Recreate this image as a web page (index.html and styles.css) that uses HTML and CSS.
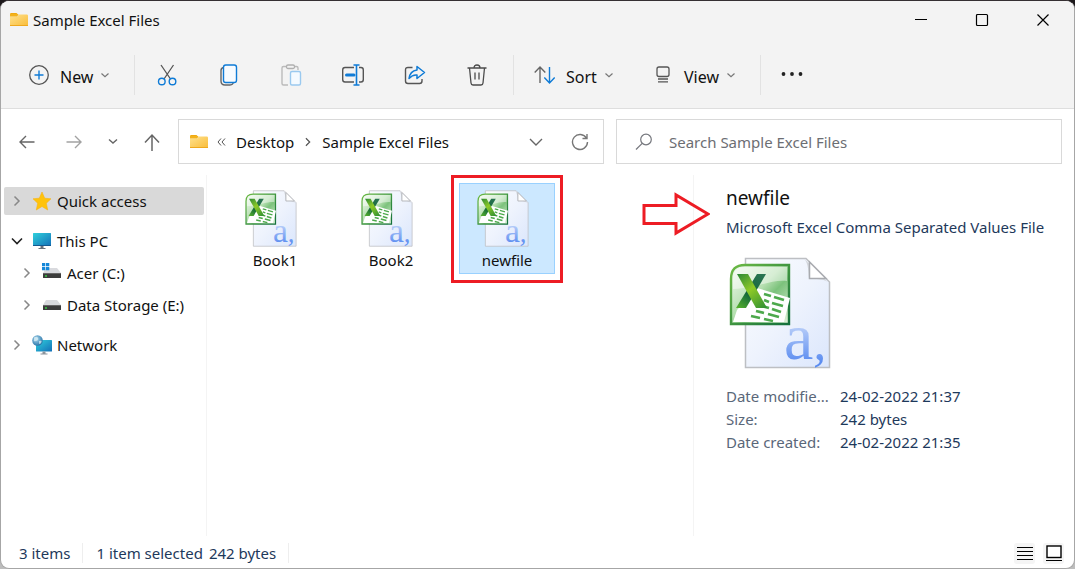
FILE: index.html
```html
<!DOCTYPE html>
<html lang="en">
<head>
<meta charset="utf-8">
<meta name="viewport" content="width=device-width, initial-scale=1">
<title>Sample Excel Files</title>
<link rel="stylesheet" href="styles.css">
</head>
<body>
<svg class="sprite" aria-hidden="true">
  <defs>
    <linearGradient id="folder-fill" x1="0" y1="0" x2="1" y2="1"><stop offset="0" stop-color="#ffe18d"/><stop offset="1" stop-color="#f9bd3a"/></linearGradient>
    <linearGradient id="screen-fill" x1="0" y1="0" x2="1" y2="1"><stop offset="0" stop-color="#2fd0dc"/><stop offset="1" stop-color="#1470b8"/></linearGradient>
    <linearGradient id="page-fill" x1="0" y1="0" x2="1" y2="1"><stop offset="0" stop-color="#fbfcff"/><stop offset="0.5" stop-color="#eef3fd"/><stop offset="1" stop-color="#dbe6fc"/></linearGradient>
    <linearGradient id="green-fill" x1="0" y1="0" x2="1" y2="1"><stop offset="0" stop-color="#f4fbf1"/><stop offset="0.45" stop-color="#b5dfb0"/><stop offset="0.6" stop-color="#7cc27c"/><stop offset="1" stop-color="#e2f3dd"/></linearGradient>
    <linearGradient id="green-edge" x1="0" y1="0" x2="1" y2="1"><stop offset="0" stop-color="#6dbb45"/><stop offset="1" stop-color="#14703c"/></linearGradient>
    <linearGradient id="light-stroke" gradientUnits="userSpaceOnUse" x1="10" y1="17" x2="38" y2="51"><stop offset="0" stop-color="#2d8a35"/><stop offset="0.45" stop-color="#8fca27"/><stop offset="1" stop-color="#2f8f33"/></linearGradient>
    <linearGradient id="dark-stroke" gradientUnits="userSpaceOnUse" x1="36" y1="17" x2="10" y2="51"><stop offset="0" stop-color="#2b7553"/><stop offset="0.6" stop-color="#12663a"/><stop offset="1" stop-color="#55b02c"/></linearGradient>
    <linearGradient id="letter-fill" x1="0" y1="0" x2="0" y2="1"><stop offset="0.4" stop-color="#b0c8f8"/><stop offset="0.85" stop-color="#5c8df0"/></linearGradient>
    <radialGradient id="globe-fill" cx="0.4" cy="0.35" r="0.7"><stop offset="0" stop-color="#a9d8ee"/><stop offset="1" stop-color="#226fa5"/></radialGradient>
  </defs>
  <symbol id="folder" viewBox="0 0 18 16">
    <path d="M0 2.200Q0 1 1.200 1H6.500L8.500 3H0Z" fill="#f0a90f"/>
    <path d="M0 4.500H7.200L9 2.500H16.800Q18 2.500 18 3.700V13.800H0Z" fill="url(#folder-fill)"/>
    <path d="M0 2h7l1.500.8L7 4.500H0Z" fill="#f3b21b"/>
    <path d="M0 13.500H18" stroke="#efa81d"/>
  </symbol>
  <symbol id="chevron-down" viewBox="0 0 8 8"><path d="M.5 2.500 4 5.700 7.500 2.500" fill="none" stroke="currentColor" stroke-width="1.200"/></symbol>
  <symbol id="chevron-right" viewBox="0 0 8 12"><path d="M1.500 1.500 6 6 1.500 10.500" fill="none" stroke="currentColor" stroke-width="1.500"/></symbol>
  <symbol id="drive" viewBox="0 0 20 16">
    <path d="M4 4H15L19 9H1Z" fill="#d9dade"/>
    <rect x="1" y="9" width="18" height="5" rx="0.500" fill="#3c3c3c"/>
    <rect x="1" y="9" width="18" height="1" fill="#666"/>
    <circle cx="4" cy="12" r="0.900" fill="#39dd46"/>
  </symbol>
  <symbol id="csv-file" viewBox="0 0 120 112">
    <path d="M17.500 1.500H78L101.500 25V110.500H17.500Z" fill="url(#page-fill)" stroke="#bdbfc3" stroke-width="1.500"/>
    <path d="M76 1.500C81 7 80 16 81 22C88 22 97 21 101.500 27Z" fill="#d3d6db"/>
    <path d="M81.500 5V21.500H98Z" fill="#fff" stroke="#a9abb0" stroke-width="1.500"/>
    <path d="M17 8H61V67H3V22Q3 8 17 8Z" fill="url(#green-fill)" stroke="url(#green-edge)" stroke-width="2.400"/>
    <path d="M17 10H59V24C44 22 30 31 5 32V22Q5 10 17 10Z" fill="#fff" opacity="0.450"/>
    <path d="M5 65 9 53 29 31 62 41 56 65Z" fill="#fff"/>
    <g stroke="#4da94c" stroke-width="2.800" fill="none">
      <path d="M36 37l7 2M46 40l10 3M36 43l5 2M44 46l11 3M34 49l7 2M44 52l9 3M28 54l8 2M40 57l11 3M23 59l9 2M36 62l9 2"/>
    </g>
    <path d="M8 51 29 17H38L18 51Z" fill="url(#dark-stroke)"/>
    <path d="M9 17H20L39 51H28Z" fill="url(#light-stroke)"/>
  </symbol>
</svg>

<div class="window">
  <header class="chrome">
    <div class="titlebar">
      <svg class="icon-folder"><use href="#folder"/></svg>
      <h1 class="title">Sample Excel Files</h1>
      <button class="caption-button" aria-label="Minimize"><svg width="14" height="14" viewBox="0 0 14 14"><path d="M1 6.500H13" stroke="#000"/></svg></button>
      <button class="caption-button" aria-label="Maximize"><svg width="14" height="14" viewBox="0 0 14 14"><rect x="1.500" y="1.500" width="11" height="11" rx="1" fill="none" stroke="#000" stroke-width="1.200"/></svg></button>
      <button class="caption-button" aria-label="Close"><svg width="14" height="14" viewBox="0 0 14 14"><path d="M1.500 1.500l11 11m0-11-11 11" stroke="#000" stroke-width="1.200"/></svg></button>
    </div>
    <div class="toolbar" role="toolbar" aria-label="Commands">
      <button class="command command-new">
        <svg width="22" height="22" viewBox="0 0 22 22" fill="none"><circle cx="11" cy="11" r="9.300" stroke="#555" stroke-width="1.300"/><path d="M11 6.500v9M6.500 11h9" stroke="#0f7bd6" stroke-width="1.400"/></svg>
        <span>New</span><svg class="chevron"><use href="#chevron-down"/></svg>
      </button>
      <span class="divider"></span>
      <div class="tools">
        <button class="tool" aria-label="Cut"><svg width="24" height="24" viewBox="0 0 24 24" fill="none"><path d="M6 2 15.500 16M18.500 2 9 16" stroke="#555" stroke-width="1.300"/><circle cx="6.800" cy="18.500" r="3.300" stroke="#0f7bd6" stroke-width="1.400"/><circle cx="17.500" cy="18.500" r="3.300" stroke="#0f7bd6" stroke-width="1.400"/></svg></button>
        <button class="tool" aria-label="Copy"><svg width="24" height="24" viewBox="0 0 24 24" fill="none"><path d="M6.500 4.500Q4 5 4 7.500V18Q4 22 8 22h5q2.500 0 3.300-2" stroke="#666" stroke-width="1.400"/><rect x="6.500" y="2" width="13" height="17.500" rx="2.200" fill="#f7fbff" stroke="#0f7bd6" stroke-width="1.400"/></svg></button>
        <button class="tool" aria-label="Paste" disabled><svg width="24" height="24" viewBox="0 0 24 24" fill="none"><path d="M8 3.500H4.500Q3 3.500 3 5V20.500Q3 22 4.500 22H9M15 3.500h2.500Q19 3.500 19 5v2" stroke="#bababa" stroke-width="1.400"/><rect x="7.500" y="2" width="8" height="3.500" rx="1.500" stroke="#b0b0b0" stroke-width="1.300"/><rect x="11.500" y="8.500" width="10" height="13.500" rx="1.500" fill="#f4faff" stroke="#9ac9ef" stroke-width="1.400"/></svg></button>
        <button class="tool" aria-label="Rename"><svg width="24" height="24" viewBox="0 0 24 24" fill="none"><path d="M13 4.500H4Q1.700 4.500 1.700 7v9.500Q1.700 19 4 19h9M18 4.500h2q2.300 0 2.300 2.500v9.500q0 2.500-2.300 2.500h-2" stroke="#555" stroke-width="1.400"/><path d="M5.500 12h7.500" stroke="#0f7bd6" stroke-width="3" stroke-linecap="round"/><path d="M15.500 2v20M12.500 2h6M12.500 22h6" stroke="#0f7bd6" stroke-width="1.600"/></svg></button>
        <button class="tool" aria-label="Share"><svg width="24" height="24" viewBox="0 0 24 24" fill="none"><path d="M9.500 4.500H5Q2.500 4.500 2.500 7V18Q2.500 20.500 5 20.500H16.500Q19 20.500 19 18V16" stroke="#555" stroke-width="1.400"/><path d="M14 3.500 21.500 9.500 14 15.500V12Q9.500 11.500 6 15.500Q7 8 14 7Z" stroke="#0f7bd6" stroke-width="1.500" stroke-linejoin="round"/></svg></button>
        <button class="tool" aria-label="Delete"><svg width="24" height="24" viewBox="0 0 24 24" fill="none"><path d="M2.500 5H21.500M9 5Q9 2 12 2t3 3M4.500 5 6 20Q6.200 22 8 22h8q1.800 0 2-2L19.500 5M10 9.500v7M14 9.500v7" stroke="#4c4c4c" stroke-width="1.300"/></svg></button>
      </div>
      <span class="divider"></span>
      <button class="command command-sort">
        <svg width="22" height="22" viewBox="0 0 22 22" fill="none" stroke-width="1.400"><path d="M6 19V3M0.700 8.500 6 3l5.300 5.500" stroke="#666"/><path d="M15.500 3v16M10.300 13.500l5.200 5.500 5.200-5.500" stroke="#0f7bd6"/></svg>
        <span>Sort</span><svg class="chevron"><use href="#chevron-down"/></svg>
      </button>
      <button class="command command-view">
        <svg width="22" height="22" viewBox="0 0 22 22" fill="none" stroke="#555" stroke-width="1.300"><rect x="5" y="3" width="12" height="9.500" rx="2"/><path d="M6 15h10M6 17.800h10"/></svg>
        <span>View</span><svg class="chevron"><use href="#chevron-down"/></svg>
      </button>
      <span class="divider"></span>
      <button class="tool" aria-label="See more"><svg width="24" height="24" viewBox="0 0 24 24" fill="#222"><circle cx="3.500" cy="11" r="1.900"/><circle cx="12" cy="11" r="1.900"/><circle cx="20.500" cy="11" r="1.900"/></svg></button>
    </div>
  </header>

  <div class="navigation">
    <nav class="history" aria-label="History">
      <button aria-label="Back"><svg width="18" height="18" viewBox="0 0 18 18"><path d="M16.500 9H2M8 3 2 9l6 6" fill="none" stroke="#666" stroke-width="1.400"/></svg></button>
      <button aria-label="Forward"><svg width="18" height="18" viewBox="0 0 18 18"><path d="M1.500 9H16M10 3l6 6-6 6" fill="none" stroke="#a2a2a2" stroke-width="1.400"/></svg></button>
      <button aria-label="Recent locations"><svg width="10" height="18" viewBox="0 0 10 18"><path d="M1 6.500 5 10 9 6.500" fill="none" stroke="#666" stroke-width="1.400"/></svg></button>
      <button aria-label="Up"><svg width="18" height="18" viewBox="0 0 18 18"><path d="M9 18V2M2 9.500 9 2l7 7.500" fill="none" stroke="#666" stroke-width="1.500"/></svg></button>
    </nav>
    <div class="address">
      <svg class="icon-folder"><use href="#folder"/></svg>
      <svg class="collapse" viewBox="0 0 9 8"><path d="M4 .5 1 4l3 3.500M8 .5 5 4l3 3.500" fill="none" stroke="#555"/></svg>
      <a href="#desktop">Desktop</a>
      <svg class="crumb-arrow"><use href="#chevron-right"/></svg>
      <a class="current-folder" href="#files">Sample Excel Files</a>
      <button aria-label="Previous locations"><svg width="14" height="14" viewBox="0 0 14 14"><path d="M1 4 7 10 13 4" fill="none" stroke="#666" stroke-width="1.400"/></svg></button>
      <button aria-label="Refresh"><svg width="18" height="18" viewBox="0 0 18 18" fill="none" stroke="#777" stroke-width="1.400"><path d="M15.500 5.200A7.500 7.500 0 1 0 16.500 9M16 1v4.500H11.500"/></svg></button>
    </div>
    <label class="search">
      <svg width="18" height="18" viewBox="0 0 18 18" fill="none" stroke="#75777d" stroke-width="1.200"><circle cx="11" cy="6.500" r="5.300"/><path d="M7.200 10.300 1 16.500"/></svg>
      <input type="search" placeholder="Search Sample Excel Files" aria-label="Search Sample Excel Files">
    </label>
  </div>

  <div class="body">
    <nav class="sidebar" aria-label="Folders">
      <a class="node selected" href="#quick"><svg class="twist"><use href="#chevron-right"/></svg><svg class="node-icon" viewBox="0 0 20 20"><path d="M10 1 12.700 7.200 19 7.800 14.300 12.200 15.700 19 10 15.500 4.300 19 5.700 12.200 1 7.800 7.300 7.200Z" fill="#ffc30b" stroke="#f9b414" stroke-width="0.600"/></svg>Quick access</a>
      <a class="node group" href="#pc"><svg class="twist open" viewBox="0 0 12 8"><path d="M1 1.500 6 6.500 11 1.500" fill="none" stroke="currentColor" stroke-width="1.600"/></svg><svg class="node-icon" viewBox="0 0 20 20"><rect x="1" y="2" width="18" height="13" rx="0.500" fill="url(#screen-fill)"/><path d="M1 14.500H19" stroke="#145a91"/><path d="M8.500 15h3v2h2v1h-7v-1h2Z" fill="#69717b"/></svg>This PC</a>
      <a class="node child" href="#c"><svg class="twist"><use href="#chevron-right"/></svg><svg class="node-icon" viewBox="0 0 20 20"><use href="#drive" y="1" width="20" height="16"/><path d="M0 0h3.300v3.300H0ZM4 0h3.300v3.300H4ZM0 4h3.300v3.300H0ZM4 4h3.300v3.300H4Z" fill="#1587d8"/></svg>Acer (C:)</a>
      <a class="node child" href="#e"><svg class="twist"><use href="#chevron-right"/></svg><svg class="node-icon" viewBox="0 0 20 20"><use href="#drive" y="1" width="20" height="16"/></svg>Data Storage (E:)</a>
      <a class="node group" href="#network"><svg class="twist"><use href="#chevron-right"/></svg><svg class="node-icon" viewBox="0 0 20 20"><rect x="4" y="5" width="16" height="11.500" rx="0.500" fill="url(#screen-fill)"/><path d="M10.500 16.500h3v2h2v1h-7v-1h2Z" fill="#8b949c"/><circle cx="5.500" cy="5.500" r="5.300" fill="url(#globe-fill)"/><path d="M2 2.500Q5 1 6 3T4 6 2 5ZM7 6q3-1 2.500 1T7 9Z" fill="#e1f2f7" opacity="0.700"/></svg>Network</a>
    </nav>
    <main class="files">
      <button class="file"><svg class="file-icon" viewBox="0 0 120 112" aria-hidden="true"><use href="#csv-file" width="120" height="112"/><text class="letter" x="56" y="102">a<tspan class="comma">,</tspan></text></svg>Book1</button>
      <button class="file"><svg class="file-icon" viewBox="0 0 120 112" aria-hidden="true"><use href="#csv-file" width="120" height="112"/><text class="letter" x="56" y="102">a<tspan class="comma">,</tspan></text></svg>Book2</button>
      <button class="file chosen"><svg class="file-icon" viewBox="0 0 120 112" aria-hidden="true"><use href="#csv-file" width="120" height="112"/><text class="letter" x="56" y="102">a<tspan class="comma">,</tspan></text></svg>newfile</button>
    </main>
    <aside class="details">
      <svg class="pointer" viewBox="0 0 68 44"><path d="M2 13.500H34V3L66 22 34 41V31.500H2Z" fill="none" stroke="#ed1c24" stroke-width="3"/></svg>
      <h2>newfile</h2>
      <p class="kind">Microsoft Excel Comma Separated Values File</p>
      <svg class="preview" viewBox="0 0 120 112" aria-hidden="true"><use href="#csv-file" width="120" height="112"/><text class="letter" x="56" y="102">a<tspan class="comma">,</tspan></text></svg>
      <dl>
        <dt>Date modifie...</dt><dd>24-02-2022 21:37</dd>
        <dt>Size:</dt><dd>242 bytes</dd>
        <dt>Date created:</dt><dd>24-02-2022 21:35</dd>
      </dl>
    </aside>
  </div>

  <footer class="status">
    <span class="count">3 items</span>
    <span class="selection"><span>1 item selected</span><span>242 bytes</span></span>
    <button class="view-mode" aria-label="Details view"><svg width="16" height="16" viewBox="0 0 16 16"><path d="M0 2.500H16M0 6.500H16M0 10.500H16M0 14.500H16" stroke="#000"/></svg></button>
    <button class="view-mode" aria-label="Large icons view"><svg width="16" height="16" viewBox="0 0 16 16"><rect x="1" y="1" width="14" height="11.500" fill="#fff" stroke="#000" stroke-width="1.400"/><path d="M0 15.500H16" stroke="#000"/></svg></button>
  </footer>
</div>
</body>
</html>
```
FILE: styles.css
```css
* { box-sizing: border-box; }

body {
  margin: 0;
  background: linear-gradient(#1d191b 50%, #bdbdbd 50%);
  color: #111;
  font: 15px/20px "Noto Sans", "Open Sans", sans-serif;
}

button {
  padding: 0;
  border: 0;
  background: none;
  color: inherit;
  font: inherit;
}

a { color: inherit; text-decoration: none; }
svg { display: block; flex: none; }
h1, h2, p, dl, dd { margin: 0; font-weight: 400; }

.sprite { position: absolute; width: 0; height: 0; }

.window {
  display: flex;
  flex-direction: column;
  min-height: 100vh;
  overflow: hidden;
  border: 1px solid #a6a6a6;
  border-top-color: #352f32;
  border-radius: 9px;
  background: #fff;
}

.chrome {
  border-bottom: 1px solid #dedede;
  background: #f3f3f3;
}

.titlebar { display: flex; align-items: center; height: 38px; padding: 0 1px 0 9px; }
.title { flex: 1; margin-left: 5px; font-size: 15px; }
.icon-folder { width: 18px; height: 16px; }
.caption-button { display: grid; place-items: center; width: 61px; height: 38px; }

.toolbar { display: flex; align-items: center; height: 69px; padding: 2px 0 0 27px; }
.command { display: flex; align-items: center; height: 40px; font-size: 16px; line-height: 24px; }
.command span { margin: 4px 8px 0 10px; }
.chevron { width: 8px; height: 8px; color: #777; }
.command-new { width: 106px; }
.command-sort { width: 120px; padding-left: 20px; }
.command-view { width: 126px; padding-left: 18px; }
.divider { width: 1px; height: 40px; background: #e2e2e2; }
.tools { display: flex; padding: 0 5px 0 1px; }
.tool { display: grid; place-items: center; width: 62px; height: 40px; }

.navigation { display: flex; align-items: center; gap: 12px; padding: 10px 12px 11px 17px; }
.history { display: flex; align-items: center; gap: 29px; width: 148px; }
.history button:nth-child(3) { margin: 0 -4px; }

.address, .search {
  display: flex;
  align-items: center;
  height: 45px;
  border: 1px solid #d9d9d9;
}

.address { flex: 399; padding: 0 14px 0 11px; }
.collapse { width: 9px; height: 8px; margin: 0 10px 0 9px; }
.crumb-arrow { width: 8px; height: 10px; margin: 0 10px; color: #555; }
.current-folder { flex: 1; white-space: nowrap; }
.address button + button { margin-left: 28px; }

.search { flex: 408; gap: 16px; padding: 0 18px; }
.search input {
  flex: 1;
  min-width: 0;
  padding: 0;
  border: 0;
  outline: 0;
  background: none;
  font: inherit;
}
.search input::placeholder { color: #6c6e73; opacity: 1; }

.body { display: flex; flex: 1; }

.sidebar { width: 206px; padding: 12px 2px 12px 3px; border-right: 1px solid #f4f4f4; }
.node { display: flex; align-items: center; height: 32px; padding-left: 9px; white-space: nowrap; }
.node.selected { height: 28px; border-radius: 2px; background: #d9d9d9; }
.node.group { margin-top: 8px; }
.node.selected + .group { margin-top: 10px; }
.node.child { padding-left: 19px; }
.twist { width: 8px; height: 12px; margin-right: 11px; color: #888; }
.twist.open { width: 12px; height: 8px; margin: 0 9px 0 -2px; color: #222; }
.node-icon { width: 20px; height: 20px; margin-right: 5px; }

.files { display: flex; flex: 1; align-items: flex-start; gap: 20px; padding: 8px 20px; }
.file {
  position: relative;
  display: flex;
  flex-direction: column;
  align-items: center;
  width: 96px;
  height: 91px;
  padding-top: 6px;
  border: 1px solid transparent;
}
.file-icon { width: 62px; height: 57px; margin-bottom: 3px; }
.letter { fill: url(#letter-fill); font-family: "Liberation Serif", serif; font-size: 66px; }
.comma { font-size: 52px; font-style: italic; }
.file.chosen { border-color: #99d1ff; background: #cce8ff; }
.file.chosen::after {
  position: absolute;
  inset: -9px -9px -10px;
  border: 3px solid #ed1c24;
  content: "";
}

.details { position: relative; width: 381px; padding: 10px 16px 0 32px; border-left: 1px solid #f4f4f4; }
.details h2 { font-size: 19px; line-height: 26px; }
.pointer { position: absolute; top: 17px; left: -52px; width: 68px; height: 44px; }
.kind { margin-top: 6px; color: #1e395b; white-space: nowrap; }
.preview { width: 120px; height: 112px; margin: 20px 0 16px 2px; }
.details dl { display: grid; grid-template-columns: 98px 1fr; column-gap: 16px; line-height: 23px; }
.details dt { color: #5a6779; white-space: nowrap; }
.details dd { color: #1e395b; }

.status { display: flex; align-items: center; height: 32px; padding: 2px 10px 0 18px; color: #1e395b; }
.count { padding-right: 12px; border-right: 1px solid #eee; }
.selection { display: flex; flex: 1; gap: 6px; padding-left: 13px; }
.selection span:last-child { padding-right: 12px; border-right: 1px solid #eee; }
.view-mode { display: grid; place-items: center; width: 21px; height: 21px; margin-left: 8px; border-radius: 3px; background: #f5f5f5; }
```
